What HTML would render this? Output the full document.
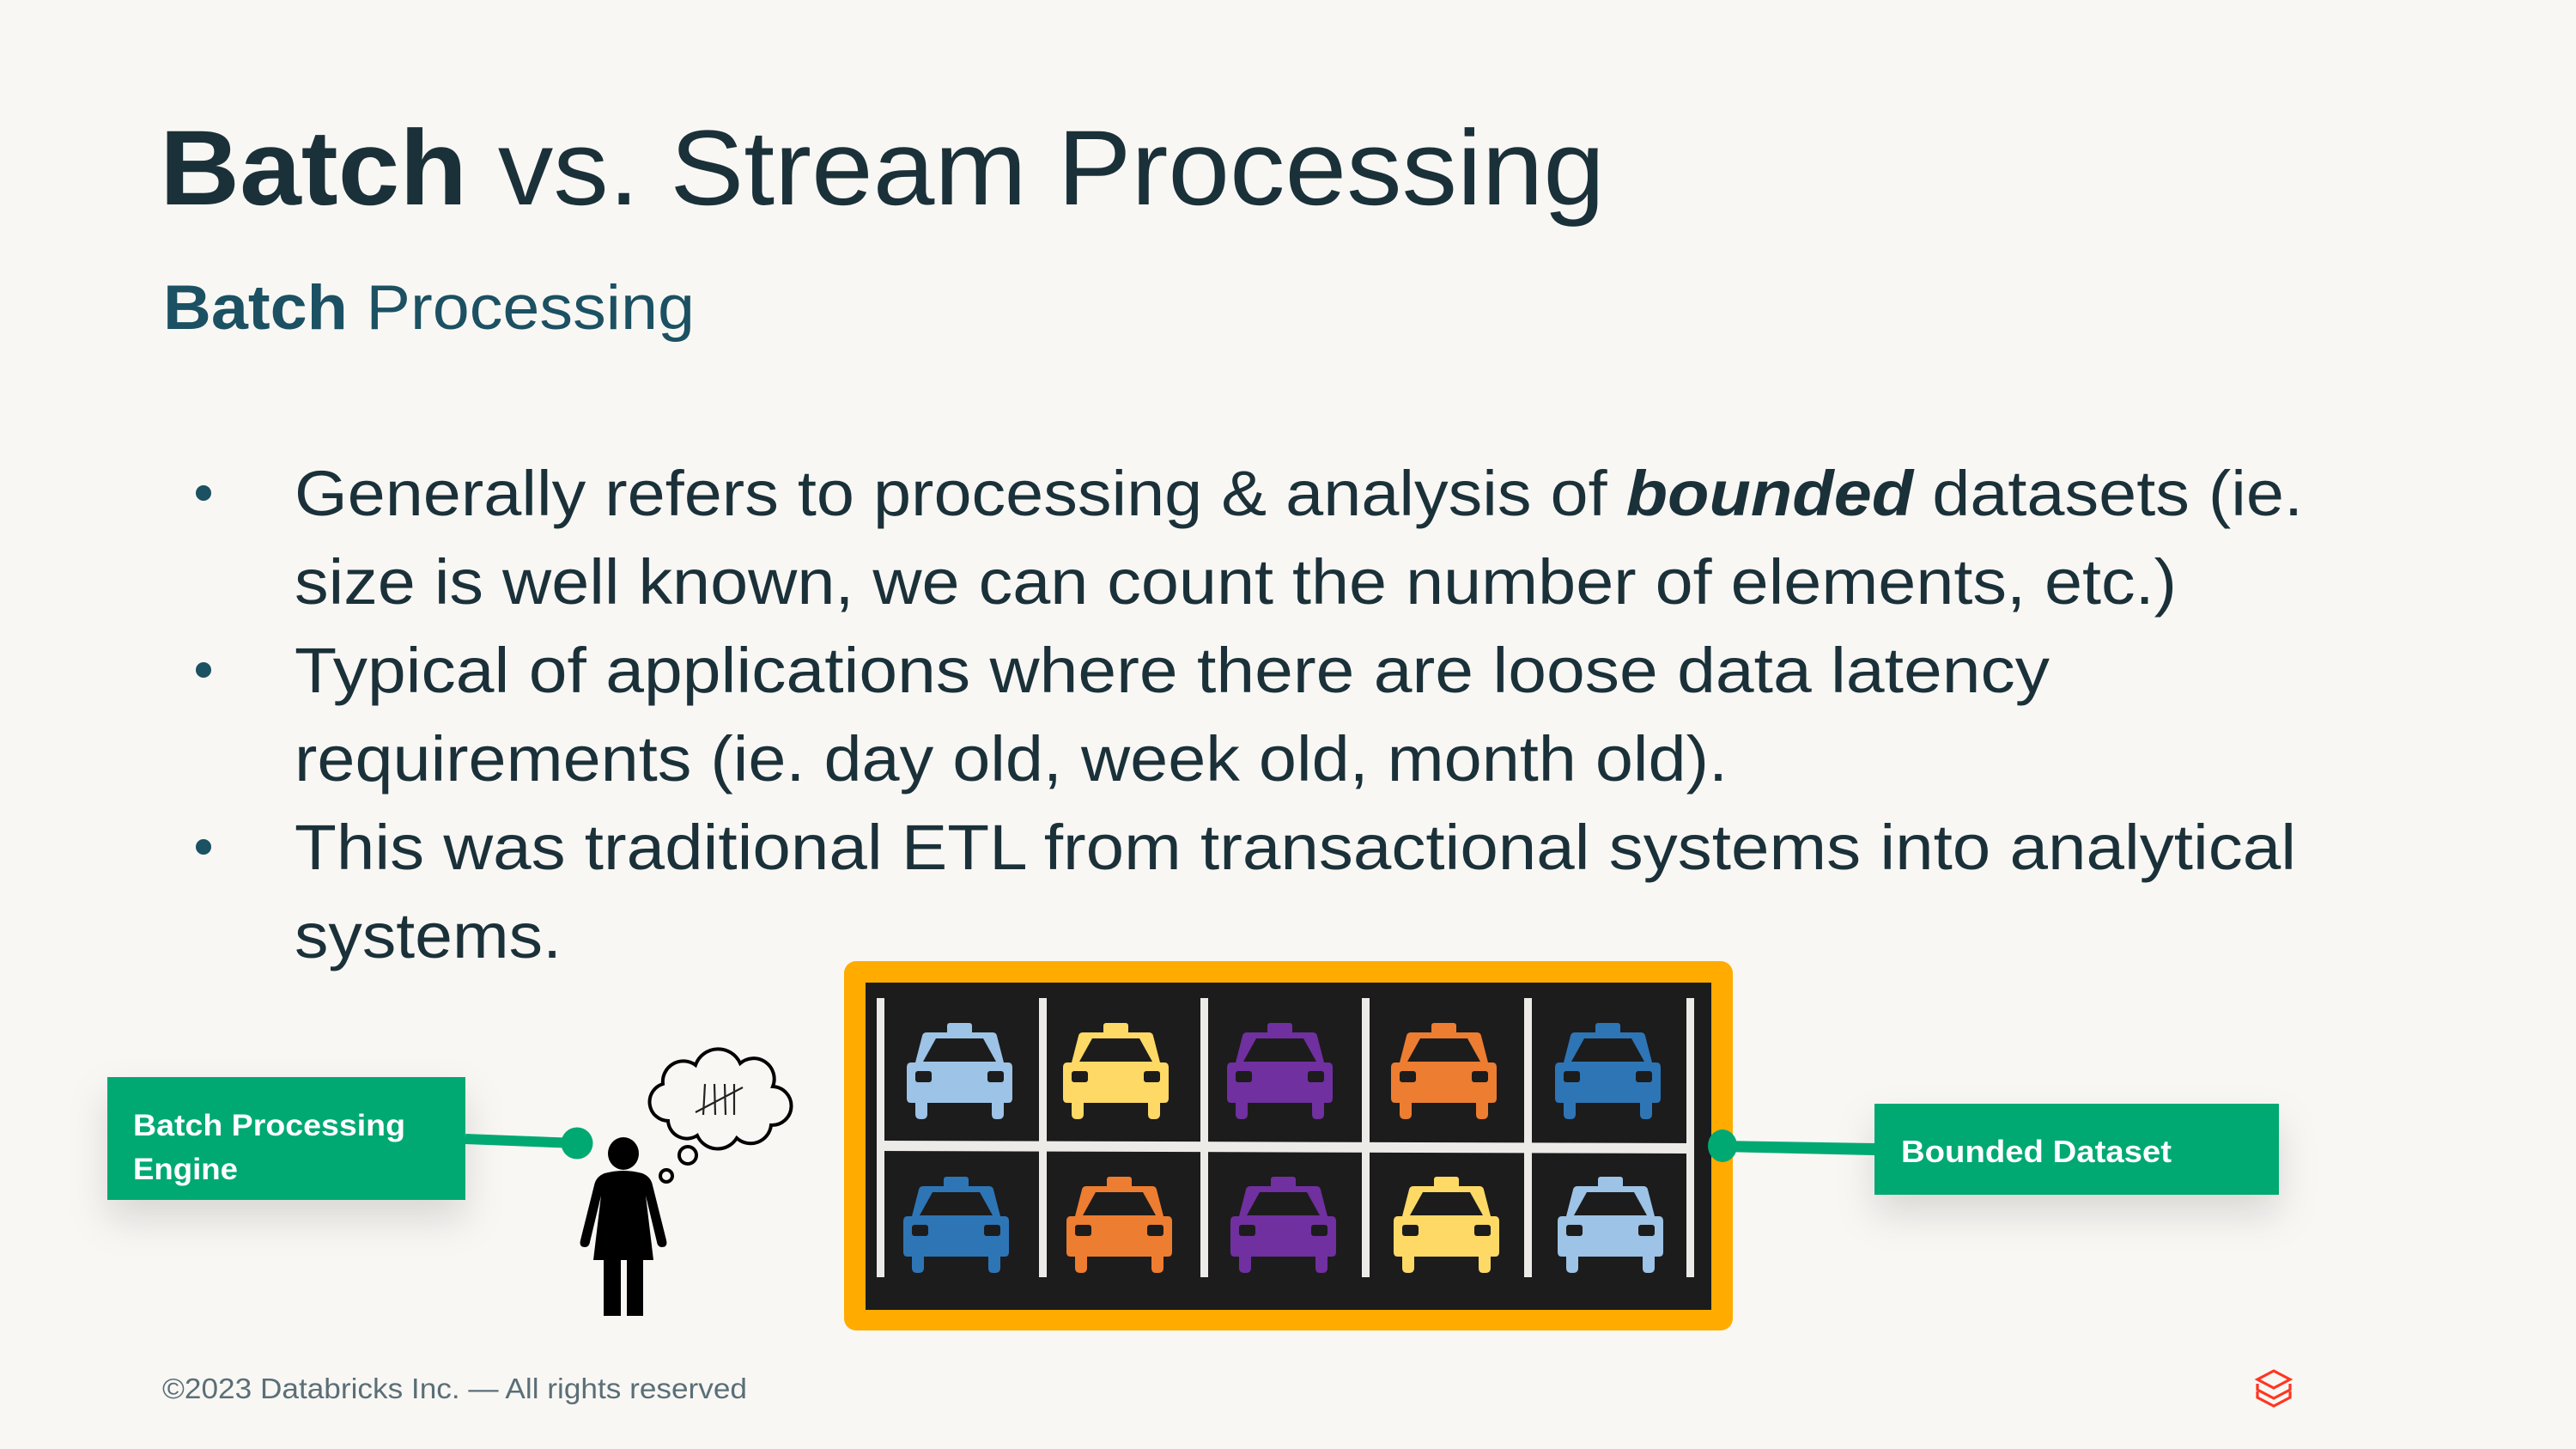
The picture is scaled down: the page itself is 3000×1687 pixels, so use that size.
<!DOCTYPE html>
<html><head><meta charset="utf-8"><style>
html,body{margin:0;padding:0;background:#f9f7f4;}
svg{display:block;}
text{font-family:"Liberation Sans",sans-serif;}
</style></head><body>
<svg width="3000" height="1687" viewBox="0 0 3000 1687" xmlns="http://www.w3.org/2000/svg">
<defs>
<filter id="sh" x="-30%" y="-30%" width="160%" height="190%">
<feDropShadow dx="0" dy="22" stdDeviation="22" flood-color="#000" flood-opacity="0.13"/>
</filter>
<g id="car">
<rect x="47" y="0" width="29" height="14" rx="3"/>
<path d="M23,11 L100,11 Q104,11 105,15 L113,46 L118,46 Q123,46 123,52 L123,88 Q123,93 118,93 L113,93 L113,106 Q113,112 107,112 L104,112 Q99,112 99,106 L99,93 L24,93 L24,106 Q24,112 18,112 L16,112 Q10,112 10,106 L10,93 L5,93 Q0,93 0,88 L0,52 Q0,46 5,46 L10,46 L18,15 Q19,11 23,11 Z"/>
<polygon points="34,18 89,18 104,45 19,45" fill="#1c1c1c"/>
<rect x="10" y="56" width="19" height="13" rx="3" fill="#1c1c1c"/>
<rect x="94" y="56" width="19" height="13" rx="3" fill="#1c1c1c"/>
</g>
</defs>
<rect width="3000" height="1687" fill="#f9f7f4"/>

<text x="186" y="238" font-size="124" fill="#1b3139" textLength="1683" lengthAdjust="spacingAndGlyphs"><tspan font-weight="bold">Batch</tspan> vs. Stream Processing</text>
<text x="190" y="383" font-size="73" fill="#1b5162" textLength="619" lengthAdjust="spacingAndGlyphs"><tspan font-weight="bold">Batch</tspan> Processing</text>

<g fill="#1b5162"><circle cx="237" cy="574" r="9"/><circle cx="237" cy="780" r="9"/><circle cx="237" cy="986" r="9"/></g>
<g font-size="74" fill="#1b3139">
<text x="343" y="600" textLength="2339" lengthAdjust="spacingAndGlyphs">Generally refers to processing &amp; analysis of <tspan font-weight="bold" font-style="italic">bounded</tspan> datasets (ie.</text>
<text x="343" y="703" textLength="2192" lengthAdjust="spacingAndGlyphs">size is well known, we can count the number of elements, etc.)</text>
<text x="343" y="806" textLength="2044" lengthAdjust="spacingAndGlyphs">Typical of applications where there are loose data latency</text>
<text x="343" y="909" textLength="1669" lengthAdjust="spacingAndGlyphs">requirements (ie. day old, week old, month old).</text>
<text x="343" y="1012" textLength="2331" lengthAdjust="spacingAndGlyphs">This was traditional ETL from transactional systems into analytical</text>
<text x="343" y="1115" textLength="311" lengthAdjust="spacingAndGlyphs">systems.</text>
</g>

<!-- left box -->
<rect x="125" y="1254" width="417" height="143" fill="#00a972" filter="url(#sh)"/>
<text x="155" y="1322" font-size="35" font-weight="bold" fill="#fff" textLength="317" lengthAdjust="spacingAndGlyphs">Batch Processing</text>
<text x="155" y="1373" font-size="35" font-weight="bold" fill="#fff" textLength="122" lengthAdjust="spacingAndGlyphs">Engine</text>
<line x1="542" y1="1326" x2="672" y2="1331" stroke="#00a972" stroke-width="12"/>
<circle cx="672" cy="1331" r="18.5" fill="#00a972"/>

<!-- person -->
<g fill="#000">
<ellipse cx="726" cy="1343" rx="18" ry="19"/>
<path d="M704,1366 Q726,1360 748,1366 Q758,1370 760,1380 L776,1444 Q778,1452 771,1452 Q766,1452 765,1446 L752,1392 L761,1467 L691,1467 L700,1392 L687,1446 Q686,1452 681,1452 Q674,1452 676,1444 L692,1380 Q694,1370 704,1366 Z"/>
<rect x="703" y="1464" width="20" height="68"/>
<rect x="730" y="1464" width="19" height="68"/>
</g>
<!-- thought -->
<g fill="#f9f7f4" stroke="#000" stroke-width="4">
<circle cx="776" cy="1369" r="7"/>
<circle cx="801" cy="1345" r="10"/>
<path d="M778,1305 A22,22 0 0 1 772,1262 A24,24 0 0 1 810,1240 A28,28 0 0 1 862,1238 A24,24 0 0 1 900,1265 A22,22 0 0 1 898,1310 A24,24 0 0 1 858,1325 A26,26 0 0 1 812,1322 A22,22 0 0 1 778,1305 Z"/>
</g>
<g stroke="#222" stroke-width="2.2" fill="none">
<line x1="821" y1="1262" x2="819" y2="1298"/>
<line x1="832" y1="1262" x2="833" y2="1298"/>
<line x1="844" y1="1262" x2="845" y2="1298"/>
<line x1="855" y1="1262" x2="855" y2="1298"/>
<line x1="810" y1="1295" x2="865" y2="1266"/>
</g>

<!-- parking lot -->
<rect x="983" y="1119" width="1035" height="430" rx="14" fill="#ffab00"/>
<rect x="1008" y="1144" width="985" height="381" fill="#1c1c1c"/>
<g fill="#ecebe8">
<rect x="1021" y="1162" width="9" height="325"/>
<rect x="1210" y="1162" width="9" height="325"/>
<rect x="1398" y="1162" width="9" height="325"/>
<rect x="1586" y="1162" width="9" height="325"/>
<rect x="1775" y="1162" width="9" height="325"/>
<rect x="1964" y="1162" width="9" height="325"/>
<polygon points="1025,1328 1968,1331 1968,1343 1025,1340"/>
</g>
<use href="#car" transform="translate(1056,1191)" fill="#9dc3e6"/>
<use href="#car" transform="translate(1238,1191)" fill="#ffd966"/>
<use href="#car" transform="translate(1429,1191)" fill="#7030a0"/>
<use href="#car" transform="translate(1620,1191)" fill="#ed7d31"/>
<use href="#car" transform="translate(1811,1191)" fill="#2e75b6"/>
<use href="#car" transform="translate(1052,1370)" fill="#2e75b6"/>
<use href="#car" transform="translate(1242,1370)" fill="#ed7d31"/>
<use href="#car" transform="translate(1433,1370)" fill="#7030a0"/>
<use href="#car" transform="translate(1623,1370)" fill="#ffd966"/>
<use href="#car" transform="translate(1814,1370)" fill="#9dc3e6"/>

<!-- right box -->
<rect x="2183" y="1285" width="471" height="106" fill="#00a972" filter="url(#sh)"/>
<text x="2214" y="1353" font-size="36" font-weight="bold" fill="#fff" textLength="315" lengthAdjust="spacingAndGlyphs">Bounded Dataset</text>
<polygon points="2006,1328 2183,1331 2183,1345 2006,1341" fill="#00a972"/>
<ellipse cx="2006" cy="1334" rx="17" ry="19" fill="#00a972"/>

<!-- footer -->
<text x="189" y="1628" font-size="33" fill="#5a6f77" textLength="681" lengthAdjust="spacingAndGlyphs">©2023 Databricks Inc. — All rights reserved</text>
<g fill="none" stroke="#ff3621" stroke-width="3.2" stroke-linejoin="miter">
<path d="M2648,1596 L2667,1606 L2648,1616 L2629,1606 Z"/>
<path d="M2629,1611 L2629,1618 L2648,1628 L2667,1618 L2667,1611"/>
<path d="M2629,1620 L2629,1627 L2648,1637 L2667,1627 L2667,1620"/>
</g>
</svg>
</body></html>
